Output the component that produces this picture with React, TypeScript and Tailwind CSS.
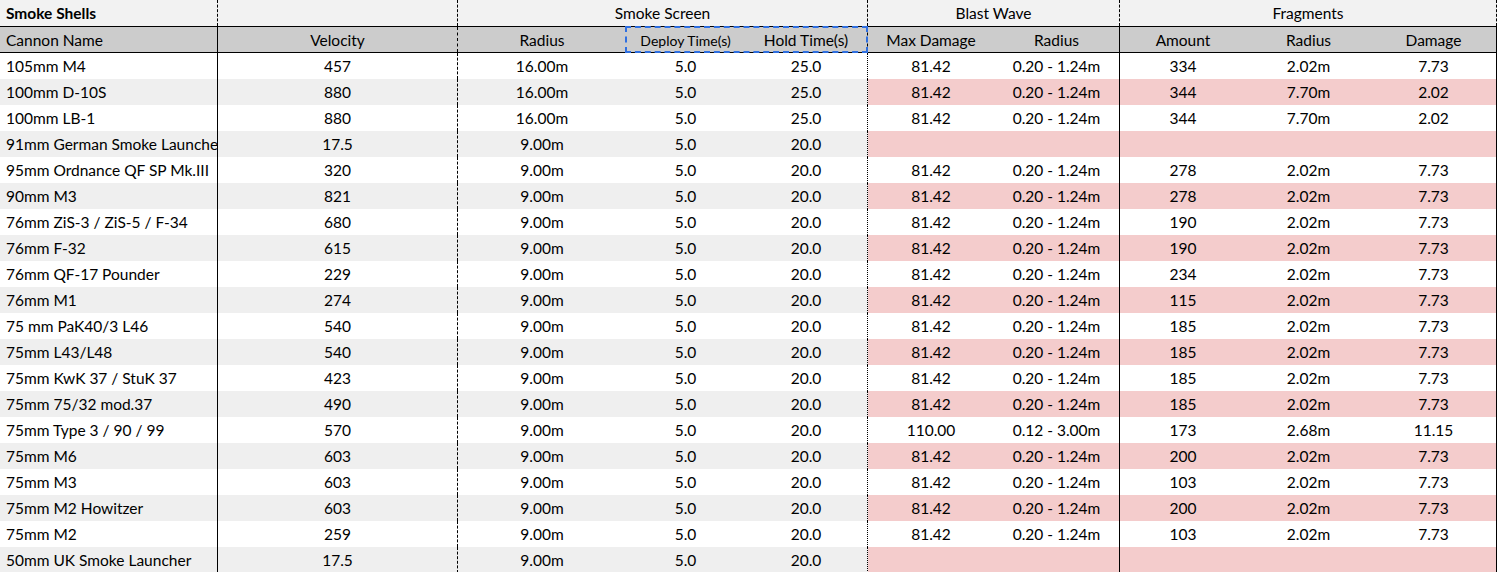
import clsx from 'clsx';

type Row = {
  name: string;
  velocity: string;
  radius: string;
  deploy: string;
  hold: string;
  blast?: [string, string];
  frag?: [string, string, string];
};

const std: [string, string] = ['81.42', '0.20 - 1.24m'];

const rows: Row[] = [
  { name: '105mm M4', velocity: '457', radius: '16.00m', deploy: '5.0', hold: '25.0', blast: std, frag: ['334', '2.02m', '7.73'] },
  { name: '100mm D-10S', velocity: '880', radius: '16.00m', deploy: '5.0', hold: '25.0', blast: std, frag: ['344', '7.70m', '2.02'] },
  { name: '100mm LB-1', velocity: '880', radius: '16.00m', deploy: '5.0', hold: '25.0', blast: std, frag: ['344', '7.70m', '2.02'] },
  { name: '91mm German Smoke Launcher', velocity: '17.5', radius: '9.00m', deploy: '5.0', hold: '20.0' },
  { name: '95mm Ordnance QF SP Mk.III', velocity: '320', radius: '9.00m', deploy: '5.0', hold: '20.0', blast: std, frag: ['278', '2.02m', '7.73'] },
  { name: '90mm M3', velocity: '821', radius: '9.00m', deploy: '5.0', hold: '20.0', blast: std, frag: ['278', '2.02m', '7.73'] },
  { name: '76mm ZiS-3 / ZiS-5 / F-34', velocity: '680', radius: '9.00m', deploy: '5.0', hold: '20.0', blast: std, frag: ['190', '2.02m', '7.73'] },
  { name: '76mm F-32', velocity: '615', radius: '9.00m', deploy: '5.0', hold: '20.0', blast: std, frag: ['190', '2.02m', '7.73'] },
  { name: '76mm QF-17 Pounder', velocity: '229', radius: '9.00m', deploy: '5.0', hold: '20.0', blast: std, frag: ['234', '2.02m', '7.73'] },
  { name: '76mm M1', velocity: '274', radius: '9.00m', deploy: '5.0', hold: '20.0', blast: std, frag: ['115', '2.02m', '7.73'] },
  { name: '75 mm PaK40/3 L46', velocity: '540', radius: '9.00m', deploy: '5.0', hold: '20.0', blast: std, frag: ['185', '2.02m', '7.73'] },
  { name: '75mm L43/L48', velocity: '540', radius: '9.00m', deploy: '5.0', hold: '20.0', blast: std, frag: ['185', '2.02m', '7.73'] },
  { name: '75mm KwK 37 / StuK 37', velocity: '423', radius: '9.00m', deploy: '5.0', hold: '20.0', blast: std, frag: ['185', '2.02m', '7.73'] },
  { name: '75mm 75/32 mod.37', velocity: '490', radius: '9.00m', deploy: '5.0', hold: '20.0', blast: std, frag: ['185', '2.02m', '7.73'] },
  { name: '75mm Type 3 / 90 / 99', velocity: '570', radius: '9.00m', deploy: '5.0', hold: '20.0', blast: ['110.00', '0.12 - 3.00m'], frag: ['173', '2.68m', '11.15'] },
  { name: '75mm M6', velocity: '603', radius: '9.00m', deploy: '5.0', hold: '20.0', blast: std, frag: ['200', '2.02m', '7.73'] },
  { name: '75mm M3', velocity: '603', radius: '9.00m', deploy: '5.0', hold: '20.0', blast: std, frag: ['103', '2.02m', '7.73'] },
  { name: '75mm M2 Howitzer', velocity: '603', radius: '9.00m', deploy: '5.0', hold: '20.0', blast: std, frag: ['200', '2.02m', '7.73'] },
  { name: '75mm M2', velocity: '259', radius: '9.00m', deploy: '5.0', hold: '20.0', blast: std, frag: ['103', '2.02m', '7.73'] },
  { name: '50mm UK Smoke Launcher', velocity: '17.5', radius: '9.00m', deploy: '5.0', hold: '20.0' },
];

const cols = 'grid grid-cols-[218px_240px_168px_119px_123px_126px_126px_126px_125px_126px]';

function Cell({ children, className }: { children?: React.ReactNode; className?: string }) {
  return (
    <div className={clsx('flex items-center justify-center pt-[2px] overflow-hidden whitespace-nowrap', className)}>
      {children}
    </div>
  );
}

export default function App() {
  return (
    <div className="min-h-screen bg-white text-black text-[15.5px] leading-none font-['Lato','Liberation_Sans',sans-serif]">
      <div className="relative w-[1497px]">
        {/* Group titles */}
        <div className="grid grid-cols-[218px_240px_410px_252px_377px] h-[27px] bg-[#f2f2f2] border-b border-black">
          <div className="flex items-center pl-[6px] pt-[2px] font-bold border-r border-dashed border-black">Smoke Shells</div>
          <div className="border-r border-dashed border-black" />
          <Cell className="border-r border-dashed border-black">Smoke Screen</Cell>
          <Cell className="border-r border-dashed border-black">Blast Wave</Cell>
          <Cell className="border-r border-dashed border-black">Fragments</Cell>
        </div>

        {/* Column headers */}
        <div className={clsx(cols, 'h-[26px] bg-[#cccccc] border-b border-black')}>
          <div className="flex items-center pl-[6px] pt-[2px] border-r border-black">Cannon Name</div>
          <Cell className="border-r border-dashed border-black">Velocity</Cell>
          <Cell>Radius</Cell>
          <Cell className="text-[14px]">Deploy Time(s)</Cell>
          <Cell className="border-r border-dashed border-black">Hold Time(s)</Cell>
          <Cell>Max Damage</Cell>
          <Cell className="border-r border-black">Radius</Cell>
          <Cell>Amount</Cell>
          <Cell>Radius</Cell>
          <Cell className="border-r border-black">Damage</Cell>
        </div>

        {/* Data */}
        {rows.map((r, i) => {
          const alt = i % 2 === 1;
          const base = alt ? 'bg-[#efefef]' : 'bg-white';
          const hl = alt ? 'bg-[#f4cccc]' : 'bg-white';
          return (
            <div key={r.name} className={clsx(cols, 'h-[26px]')}>
              <div className={clsx('flex items-center pl-[6px] pt-[2px] overflow-hidden whitespace-nowrap border-r border-black', base)}>
                {r.name}
              </div>
              <Cell className={clsx(base, 'border-r border-dashed border-black')}>{r.velocity}</Cell>
              <Cell className={base}>{r.radius}</Cell>
              <Cell className={base}>{r.deploy}</Cell>
              <Cell className={clsx(base, 'border-r border-dotted border-black')}>{r.hold}</Cell>
              <Cell className={hl}>{r.blast?.[0]}</Cell>
              <Cell className={clsx(hl, 'border-r border-black')}>{r.blast?.[1]}</Cell>
              <Cell className={hl}>{r.frag?.[0]}</Cell>
              <Cell className={hl}>{r.frag?.[1]}</Cell>
              <Cell className={clsx(hl, 'border-r border-black')}>{r.frag?.[2]}</Cell>
            </div>
          );
        })}

        {/* Selection box */}
        <div className="absolute left-[625px] top-[26px] w-[243px] h-[27px] border-2 border-dashed border-[#2f6fe0] pointer-events-none" />
      </div>
    </div>
  );
}
